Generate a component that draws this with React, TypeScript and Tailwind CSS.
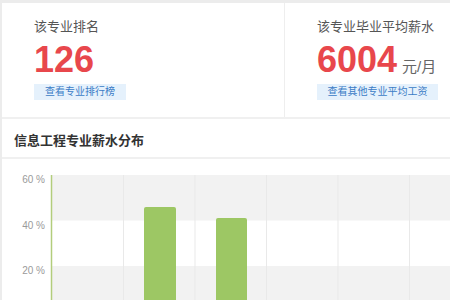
import React from "react";

const font = { fontFamily: '"Liberation Sans", "Noto Sans CJK SC", sans-serif' };

function Stat({
  title,
  value,
  unit,
  button,
  btnWidth,
}: {
  title: string;
  value: string;
  unit?: string;
  button: string;
  btnWidth: string;
}) {
  return (
    <div className="flex flex-col pl-[32px] pt-[15px]">
      <div className="text-[13px] leading-[18px] text-[#555]">{title}</div>
      <div className="mt-[6px] flex items-baseline h-[36px]">
        <span className="text-[36px] leading-[36px] font-bold text-[#e8474c]">{value}</span>
        {unit && <span className="ml-[5px] text-[15px] text-[#666]">{unit}</span>}
      </div>
      <div
        className={`mt-[6px] h-[16px] ${btnWidth} bg-[#e5f1fc] text-[10px] leading-[16px] text-[#3b7cc6] text-center`}
      >
        {button}
      </div>
    </div>
  );
}

function Chart() {
  const grid = [121.5, 193, 264.5, 336, 407.5];
  return (
    <svg width="448" height="141" className="block">
      <rect x="50" y="16" width="398" height="45.5" fill="#f2f2f2" />
      <rect x="50" y="107" width="398" height="40" fill="#f2f2f2" />
      {grid.map((x) => (
        <line key={x} x1={x} y1="16" x2={x} y2="141" stroke="#e9e9e9" strokeWidth="1" />
      ))}
      <line x1="49.5" y1="16" x2="49.5" y2="141" stroke="#b3cd7c" strokeWidth="1.5" />
      <text x="43" y="24" textAnchor="end" fontSize="10" fill="#9a9a9a" style={font}>60 %</text>
      <text x="43" y="69.5" textAnchor="end" fontSize="10" fill="#9a9a9a" style={font}>40 %</text>
      <text x="43" y="115" textAnchor="end" fontSize="10" fill="#9a9a9a" style={font}>20 %</text>
      <path d="M142 141 V50 Q142 48 144 48 H172 Q174 48 174 50 V141 Z" fill="#9dc764" />
      <path d="M214 141 V61 Q214 59 216 59 H243 Q245 59 245 61 V141 Z" fill="#9dc764" />
    </svg>
  );
}

export default function App() {
  return (
    <div className="w-[450px] h-[300px] overflow-hidden bg-[#ececec] pt-[3px] pl-[2px]" style={font}>
      <div className="bg-white h-full">
        <div className="flex h-[116px] border-b-2 border-[#f0f0f0]">
          <div className="w-[283px] border-r border-[#eeeeee]">
            <Stat title="该专业排名" value="126" button="查看专业排行榜" btnWidth="w-[92px]" />
          </div>
          <div className="flex-1">
            <Stat
              title="该专业毕业平均薪水"
              value="6004"
              unit="元/月"
              button="查看其他专业平均工资"
              btnWidth="w-[121px]"
            />
          </div>
        </div>
        <div className="h-[40px] border-b-2 border-[#f0f0f0] pl-[12px] pt-[14px]">
          <div className="text-[13px] leading-[16px] font-bold text-[#333]">信息工程专业薪水分布</div>
        </div>
        <Chart />
      </div>
    </div>
  );
}
